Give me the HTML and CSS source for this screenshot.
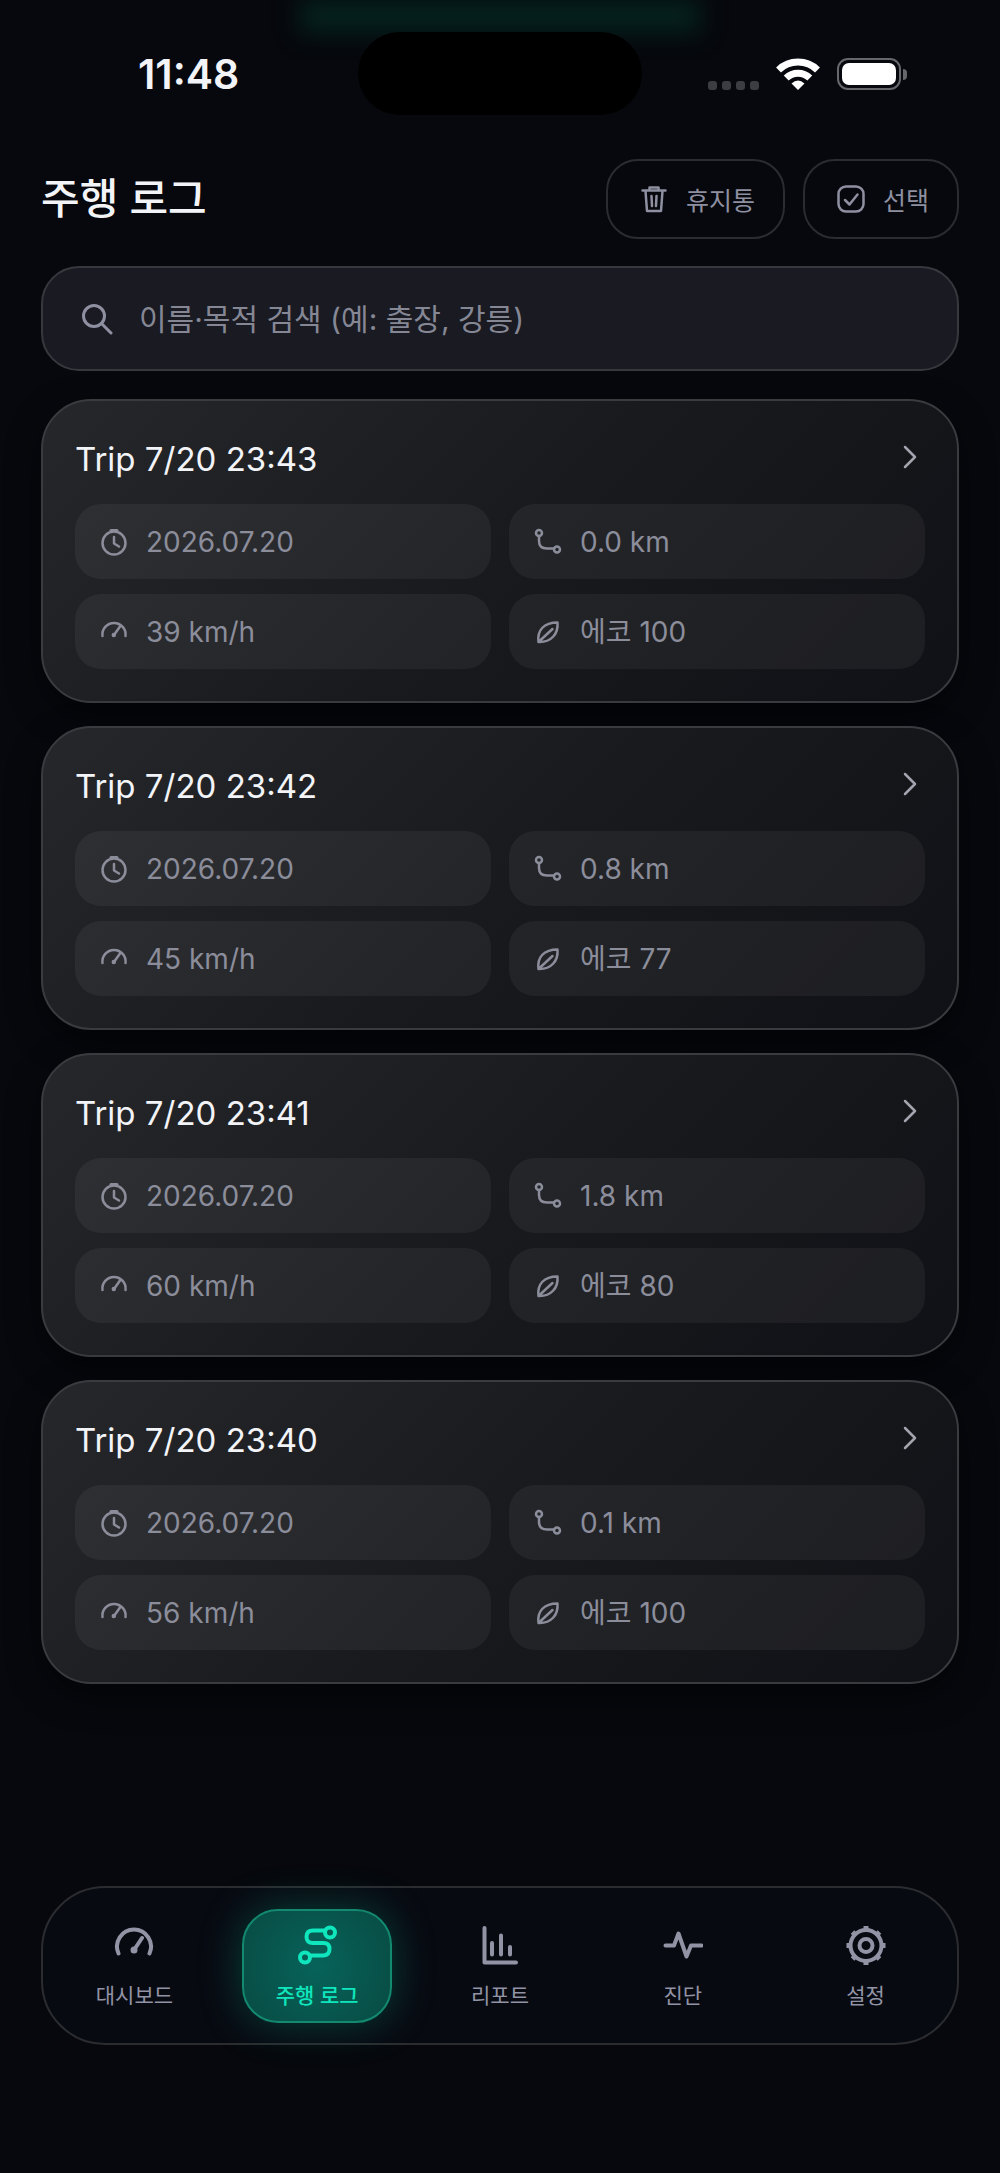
FILE: index.html
```html
<!DOCTYPE html>
<html lang="ko">
<head>
  <meta charset="UTF-8">
  <meta name="viewport" content="width=device-width, initial-scale=1.0">
  <title>주행 로그</title>
  <link rel="stylesheet" href="styles.css">
</head>
<body>

  <svg class="sprite" aria-hidden="true">
    <symbol id="icon-trash" viewBox="0 0 28 28">
      <path d="M2.500 5.500h23M9.500 4V2.500h9V4M5.500 6l1.500 20h14l1.500-20M11.500 11l.5 10M16.500 11l-.5 10" />
    </symbol>
    <symbol id="icon-check" viewBox="0 0 28 28">
      <rect x="1.500" y="1.500" width="25" height="25" rx="7.500" />
      <path d="M8 15l4.500 4.500L20.500 9.500" />
    </symbol>
    <symbol id="icon-search" viewBox="0 0 32 32">
      <circle cx="13" cy="13" r="10.500" />
      <path d="M20.500 20.500L30 30" />
    </symbol>
    <symbol id="icon-chevron" viewBox="0 0 14 24">
      <path d="M2 2l10 10L2 22" />
    </symbol>
    <symbol id="icon-clock" viewBox="0 0 28 28">
      <circle cx="14" cy="15" r="11.500" />
      <path d="M14 9v6.500l5 3" />
      <path d="M11 2.500h6" stroke-width="3" />
    </symbol>
    <symbol id="icon-speed" viewBox="0 0 28 28">
      <path d="M2.500 18a11.600 11.600 0 1 1 23 0M14 17l6-8.500" />
      <circle cx="13.800" cy="17" r="1" />
    </symbol>
    <symbol id="icon-route" viewBox="0 0 28 28">
      <circle cx="5" cy="5" r="3" />
      <circle cx="23" cy="21.500" r="3" />
      <path d="M5 8v5q0 7.500 8 7.500h7" />
    </symbol>
    <symbol id="icon-leaf" viewBox="0 0 28 28">
      <path d="M4.500 24C3 12 10 4.500 23.500 4.500 24.500 16 17 24.500 4.500 24zL18.500 11" />
    </symbol>
    <symbol id="icon-gauge" viewBox="0 0 40 40">
      <path d="M4.500 28.500a17 17 0 1 1 31 0M20 25l8-12" />
      <circle cx="20" cy="25" r="1.500" />
    </symbol>
    <symbol id="icon-path" viewBox="0 0 40 40">
      <circle cx="33" cy="7.500" r="5" />
      <circle cx="8" cy="32.500" r="5" />
      <path d="M28 5.500H16q-6.500 0-6.500 6.300T16 18h10.500q6 0 6 6t-6 6.500H13" />
    </symbol>
    <symbol id="icon-chart" viewBox="0 0 40 40">
      <path d="M4.500 3v34.500h31.500M12 18v11.500M21 10.500v19M30 22v7.500" />
    </symbol>
    <symbol id="icon-pulse" viewBox="0 0 40 40">
      <path d="M2.500 20.500h8.500L15.500 8.500l8 23 4.500-11h10.500" />
    </symbol>
    <symbol id="icon-gear" viewBox="0 0 40 40">
      <circle cx="20" cy="20.500" r="15.500" />
      <circle cx="20" cy="20.500" r="6.500" />
      <path d="M20 5V1M20 36v4M4.500 20.500h-4M35.500 20.500h4M9 9.500L6.500 7M31 9.500L33.500 7M9 31.500L6.500 34M31 31.500l2.500 2.500" stroke-width="5" stroke-linecap="butt" />
    </symbol>
  </svg>

  <div class="status-bar">
    <time class="clock">11:48</time>
    <div class="island"></div>
    <div class="status-icons">
      <div class="signal"><i></i><i></i><i></i><i></i></div>
      <svg class="wifi" viewBox="0 0 44 32">
        <path class="wave" d="M2.500 12a28 28 0 0 1 39 0M10.200 20a17 17 0 0 1 23.600 0" />
        <path class="dot" d="M22 32l-6.500-6.500q6.500-6 13 0z" />
      </svg>
      <div class="battery"><div class="battery-level"></div></div>
    </div>
  </div>

  <header class="page-header">
    <h1>주행 로그</h1>
    <div class="actions">
      <button type="button" class="action-btn"><svg class="icon"><use href="#icon-trash" /></svg>휴지통</button>
      <button type="button" class="action-btn"><svg class="icon"><use href="#icon-check" /></svg>선택</button>
    </div>
  </header>

  <main>
    <label class="search">
      <svg class="icon"><use href="#icon-search" /></svg>
      <input type="search" aria-label="검색" placeholder="이름·목적 검색 (예: 출장, 강릉)">
    </label>
    <ul class="trips" id="tripList"></ul>
  </main>

  <nav class="tab-bar">
    <a href="#dashboard"><svg class="icon"><use href="#icon-gauge" /></svg>대시보드</a>
    <a href="#logs" class="active" aria-current="page"><svg class="icon"><use href="#icon-path" /></svg>주행 로그</a>
    <a href="#report"><svg class="icon"><use href="#icon-chart" /></svg>리포트</a>
    <a href="#diagnosis"><svg class="icon"><use href="#icon-pulse" /></svg>진단</a>
    <a href="#settings"><svg class="icon"><use href="#icon-gear" /></svg>설정</a>
  </nav>

  <script>
    const trips = [
      { name: 'Trip 7/20 23:43', date: '2026.07.20', distance: '0.0', speed: 39, eco: 100 },
      { name: 'Trip 7/20 23:42', date: '2026.07.20', distance: '0.8', speed: 45, eco: 77 },
      { name: 'Trip 7/20 23:41', date: '2026.07.20', distance: '1.8', speed: 60, eco: 80 },
      { name: 'Trip 7/20 23:40', date: '2026.07.20', distance: '0.1', speed: 56, eco: 100 }
    ];

    function chip(icon, text) {
      return `<div class="chip"><svg class="icon"><use href="#icon-${icon}" /></svg>${text}</div>`;
    }

    document.getElementById('tripList').innerHTML = trips.map(trip => `
      <li>
        <a class="trip" href="#trip">
          <div class="trip-head">
            <h2>${trip.name}</h2>
            <svg class="icon chevron"><use href="#icon-chevron" /></svg>
          </div>
          <div class="chips">
            ${chip('clock', trip.date)}
            ${chip('route', trip.distance + ' km')}
            ${chip('speed', trip.speed + ' km/h')}
            ${chip('leaf', '에코 ' + trip.eco)}
          </div>
        </a>
      </li>`).join('');
  </script>
</body>
</html>
```
FILE: styles.css
```css
* {
  box-sizing: border-box;
}
body {
  display: flex;
  flex-direction: column;
  min-height: 100vh;
  margin: 0;
  padding: 0 41px 128px;
  background: #06080d;
  color: #f3f4f8;
  font-family: Inter, "Noto Sans CJK KR", sans-serif;
}
/* accent light behind the status bar */
body::before {
  content: "";
  position: absolute;
  top: 0;
  left: 50%;
  z-index: -1;
  width: 400px;
  height: 32px;
  transform: translateX(-50%);
  background: #05231f;
  filter: blur(12px);
}
h1, h2, ul {
  margin: 0;
  padding: 0;
  list-style: none;
}
a {
  color: inherit;
  text-decoration: none;
}
.sprite {
  position: absolute;
  width: 0;
  height: 0;
}
.icon {
  flex: none;
  width: 28px;
  height: 28px;
  fill: none;
  stroke: currentColor;
  stroke-width: 2.5;
  stroke-linecap: round;
  stroke-linejoin: round;
}

/* status bar */
.status-bar {
  display: grid;
  grid-template-columns: 1fr 284px 1fr;
  align-items: center;
  height: 83px;
  margin-top: 32px;
}
.clock {
  padding-left: 97px;
  font-size: 41px;
  font-weight: 600;
}
.island {
  height: 83px;
  border-radius: 42px;
  background: #000;
}
.status-icons {
  display: flex;
  justify-content: flex-end;
  align-items: center;
  gap: 17px;
  padding-right: 58px;
}
.signal {
  display: flex;
  align-self: flex-end;
  gap: 5px;
}
.signal i {
  width: 9px;
  height: 9px;
  border-radius: 3px;
  background: #3c3d42;
}
.wifi {
  width: 44px;
  height: 32px;
}
.wifi .wave {
  fill: none;
  stroke: #fff;
  stroke-width: 7;
}
.wifi .dot {
  fill: #fff;
}
.battery {
  position: relative;
  width: 64px;
  height: 32px;
  padding: 3px;
  border: 2px solid #66676b;
  border-radius: 11px;
}
.battery::after {
  content: "";
  position: absolute;
  top: 9px;
  right: -8px;
  width: 4px;
  height: 11px;
  border-radius: 0 4px 4px 0;
  background: #66676b;
}
.battery-level {
  height: 100%;
  border-radius: 7px;
  background: #fff;
}

/* header */
.page-header {
  display: flex;
  justify-content: space-between;
  align-items: center;
  margin-top: 44px;
}
h1 {
  font-size: 42px;
  font-weight: 500;
  line-height: 60px;
}
.actions {
  display: flex;
  gap: 18px;
}
.action-btn {
  display: flex;
  align-items: center;
  gap: 18px;
  height: 80px;
  padding: 0 28px 0 32px;
  border: 2px solid #2b2c31;
  border-radius: 32px;
  background: none;
  color: #8e90a1;
  font: 25px Inter, "Noto Sans CJK KR", sans-serif;
}

/* search */
.search {
  display: flex;
  align-items: center;
  gap: 26px;
  height: 105px;
  margin: 27px 0 28px;
  padding: 0 38px;
  border: 2px solid #37383d;
  border-radius: 38px;
  background: #191a22;
  color: #8e90a1;
}
.search .icon {
  width: 32px;
  height: 32px;
  stroke-width: 3;
}
.search input {
  flex: 1;
  min-width: 0;
  padding: 0;
  border: 0;
  outline: 0;
  background: none;
  color: #f3f4f8;
  font: 30px Inter, "Noto Sans CJK KR", sans-serif;
}
.search input::placeholder {
  color: #858795;
  opacity: 1;
}

/* trip cards */
.trips {
  display: flex;
  flex-direction: column;
  gap: 23px;
}
.trip {
  display: block;
  padding: 32px;
  border: 2px solid #3a3b3f;
  border-radius: 50px;
  background: linear-gradient(135deg, #26272b, #191a1d 50%, #101116);
  box-shadow: 0 12px 32px rgba(0, 0, 0, 0.5);
}
.trip-head {
  display: flex;
  justify-content: space-between;
  height: 71px;
}
h2 {
  font-size: 33px;
  font-weight: 400;
  line-height: 52px;
}
.chevron {
  width: 14px;
  height: 24px;
  margin: 12px 8px 0;
  color: #a3a4ad;
}
.chips {
  display: grid;
  grid-template-columns: 1fr 1fr;
  gap: 15px 18px;
}
.chip {
  display: flex;
  align-items: center;
  gap: 18px;
  height: 75px;
  padding: 0 24px 0 25px;
  border-radius: 26px;
  background: rgba(255, 255, 255, 0.05);
  color: #8b8d9b;
  font-size: 28px;
  line-height: 36px;
}

/* bottom tabs */
.tab-bar {
  display: grid;
  grid-template-columns: repeat(5, 1fr);
  align-items: center;
  height: 159px;
  margin-top: auto;
  border: 2px solid #2b2c30;
  border-radius: 64px;
  background: #080a12;
  color: #9294a5;
}
.tab-bar a {
  display: flex;
  flex-direction: column;
  align-items: center;
  justify-self: center;
  gap: 15px;
  width: 150px;
  height: 114px;
  padding-top: 14px;
  border: 2px solid transparent;
  border-radius: 36px;
  font-size: 21px;
  line-height: 32px;
}
.tab-bar .icon {
  width: 40px;
  height: 40px;
  stroke-width: 4;
}
.tab-bar .active {
  border-color: #138a70;
  background: radial-gradient(circle, #07635a, #084b43);
  box-shadow: 0 0 40px rgba(11, 150, 120, 0.4);
  color: #0fe6bd;
  font-weight: 500;
}
```
